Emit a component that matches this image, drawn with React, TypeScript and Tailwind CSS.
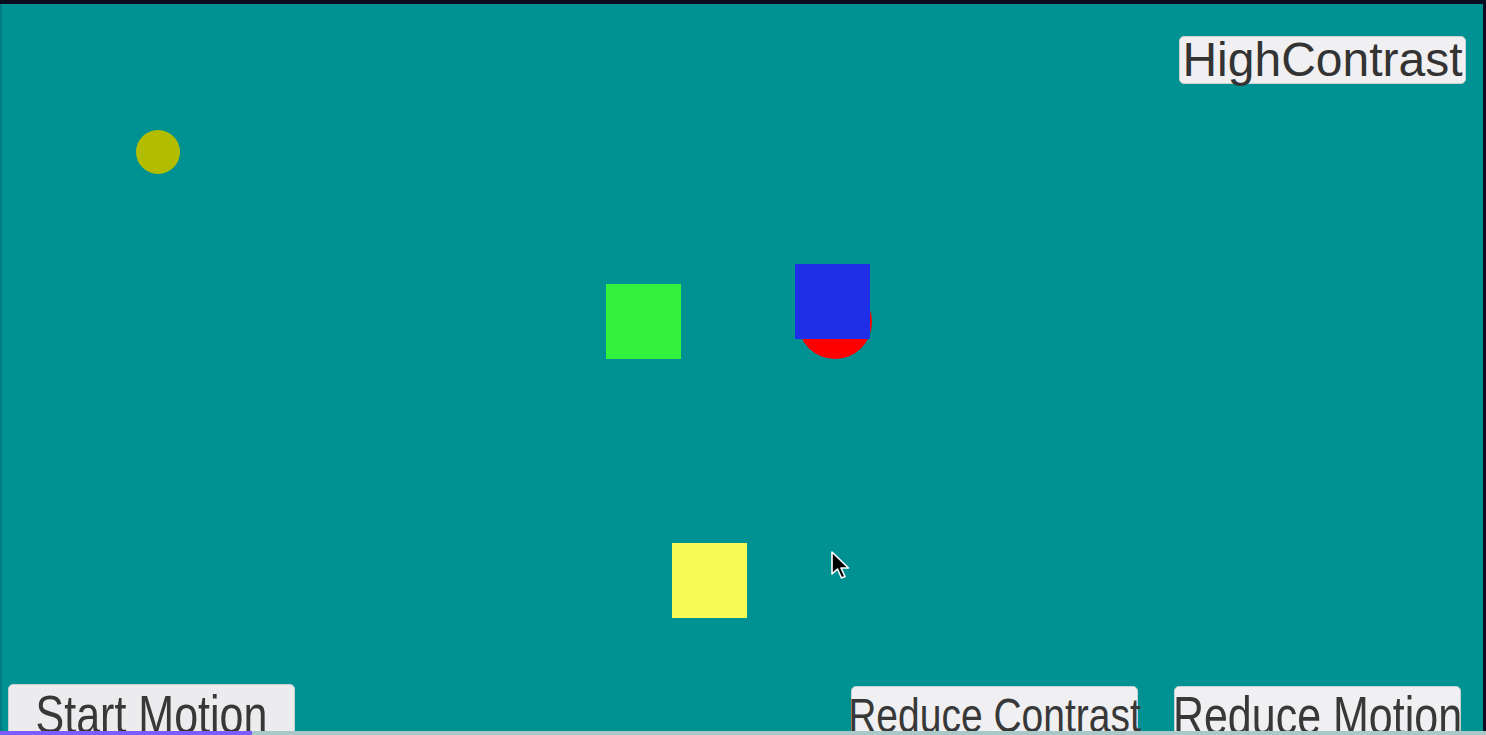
import React from 'react';

const font = "font-['Liberation_Sans',Arial,sans-serif]";

export default function App() {
  return (
    <div className={`w-[1486px] h-[735px] bg-[#0b0c20] overflow-hidden flex flex-col ${font}`}>
      <div className="h-[4px] shrink-0" />
      <div className="flex-1 flex pr-[3px] min-h-0">
        {/* game canvas */}
        <div className="relative flex-1 bg-[#009193] border-l-[2px] border-[#007c80] overflow-hidden flex flex-col justify-between">
          {/* shapes on the canvas */}
          <div className="absolute left-[134px] top-[126px] w-[44px] h-[44px] rounded-full bg-[#b3bd00]" />
          <div className="absolute left-[604px] top-[280px] w-[75px] h-[75px] bg-[#33f23d]" />
          <div className="absolute left-[796px] top-[281px] w-[74px] h-[74px] rounded-full bg-[#ff0000]" />
          <div className="absolute left-[793px] top-[260px] w-[75px] h-[75px] bg-[#1f2fe8]" />
          <div className="absolute left-[670px] top-[539px] w-[75px] h-[75px] bg-[#f9fb55]" />
          <svg className="absolute left-[828px] top-[546px]" width="22" height="30" viewBox="0 0 22 30">
            <path d="M2 2 L2 24 L7.5 19 L11.5 28 L15 26.5 L11 18 L18.5 18 Z" fill="#000" stroke="#fff" strokeWidth="1.6" strokeLinejoin="round" />
          </svg>

          <div className="relative flex justify-end pt-[32px] pr-[17px]">
            <button className="w-[287px] h-[48px] bg-[#f0f0f2] border border-[#c8d0d0] rounded-[5px] text-[#333] text-[48px] leading-none flex items-center justify-center whitespace-nowrap">
              HighContrast
            </button>
          </div>

          <div className="relative flex items-start h-[47px] pl-[6px]">
            <button className="w-[287px] h-[56px] shrink-0 bg-[#ececee] border border-[#c8d0d0] rounded-[5px] text-[#383838] text-[43px] leading-none flex justify-center whitespace-nowrap">
              <span className="inline-block mt-[9px] scale-y-[1.25]">Start Motion</span>
            </button>
            <div className="flex-1" />
            <button className="mt-[2px] w-[287px] h-[56px] shrink-0 bg-[#f0f0f2] border border-[#c8d0d0] rounded-[5px] text-[#383838] text-[39px] leading-none flex justify-center whitespace-nowrap">
              <span className="inline-block mt-[9px] scale-y-[1.25]">Reduce Contrast</span>
            </button>
            <button className="mt-[2px] ml-[36px] mr-[22px] w-[287px] h-[56px] shrink-0 bg-[#f0f0f2] border border-[#c8d0d0] rounded-[5px] text-[#383838] text-[43px] leading-none flex justify-center whitespace-nowrap">
              <span className="inline-block mt-[8px] scale-y-[1.25]">Reduce Motion</span>
            </button>
          </div>
        </div>
      </div>
      {/* bottom progress strip */}
      <div className="h-[4px] shrink-0 flex bg-[#a9c9c9]">
        <div className="w-[252px] bg-[#7a5cff]" />
      </div>
    </div>
  );
}
